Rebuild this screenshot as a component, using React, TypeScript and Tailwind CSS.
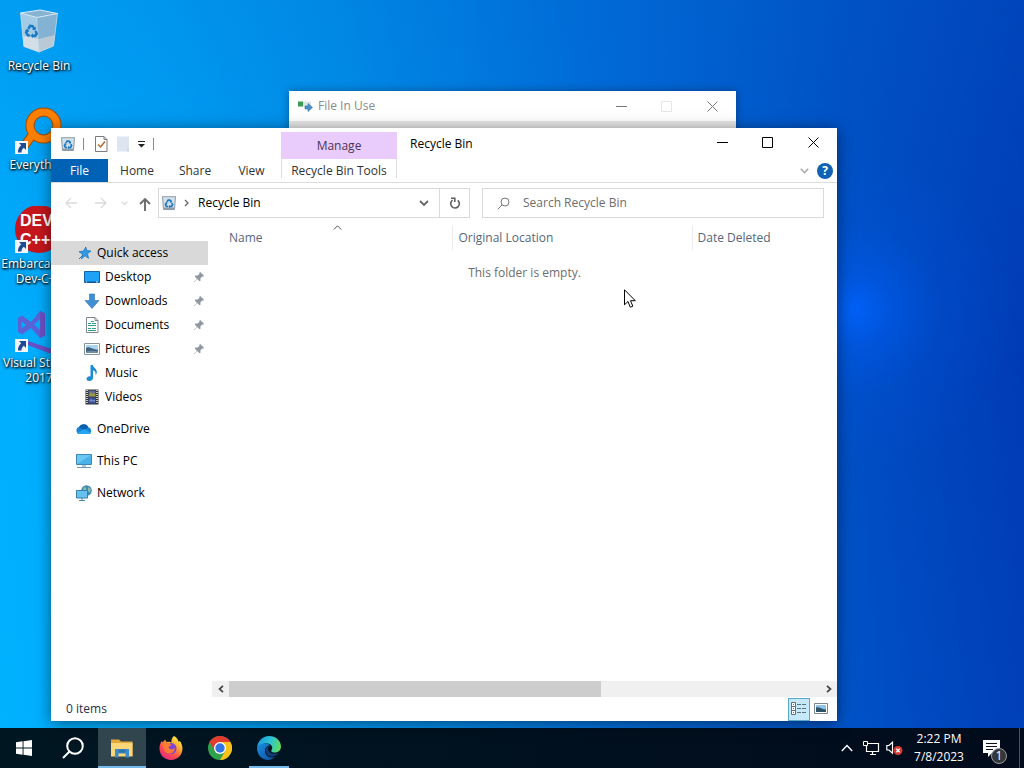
import type { ReactNode } from "react";

type IconProps = { className?: string };

/* ---------- shared glyphs ---------- */

function RecycleMark() {
  return (
    <g fill="none" stroke="#1879c4" strokeWidth="4">
      <path d="M7 8.500 10 3.500h4l2.500 4" />
      <path d="M18.500 11l2 4-2.500 4h-4" />
      <path d="M9.500 19H6l-2.500-4L5.500 11" />
      <path d="M19 3.500v6h-6z M14.500 15v8l-4-4z M1.500 11.500l5-3 2 5z" fill="#1879c4" stroke="none" />
    </g>
  );
}

function BinSmall({ className = "" }: IconProps) {
  return (
    <svg viewBox="0 0 14 16" className={`h-4 w-3.5 ${className}`} aria-hidden="true">
      <path d="M.5 1.500h13l-1 13h-11z" fill="#d3dfe8" stroke="#8b9aa5" />
      <path d="M1 2h12" stroke="#b9c7d1" />
      <path d="M2 13.500h10" stroke="#8e9da8" strokeWidth="2" />
      <g transform="translate(2 3.500) scale(.42)">
        <RecycleMark />
      </g>
    </svg>
  );
}

function BinLarge() {
  return (
    <svg viewBox="0 0 48 48" className="h-12 w-12" aria-hidden="true">
      <path d="M5.500 5 22 9.500 24 44 8.500 38.500z" fill="#a3cbe6" />
      <path d="M22 9.500 42.500 5.500 38.500 38 24 44z" fill="#84b2d2" />
      <path d="M8 28 23.500 31 24 44 9 38.500z" fill="#d3dee6" />
      <path d="M23.500 31 40 27 38.500 38 24 44z" fill="#b9c9d5" />
      <path d="M5.500 5 25 2l17.500 3.500L22 9.500z" fill="#86b3d0" stroke="#dcebf5" />
      <path d="M5.500 5 9 38.500 24 44l14.500-6L42.500 5.500" fill="none" stroke="#cfe0ec" strokeOpacity=".7" />
      <path d="M22 9.500 24 44" stroke="#cfe0ec" strokeOpacity=".5" />
      <g transform="translate(9 15) scale(.62) skewY(6)">
        <RecycleMark />
      </g>
    </svg>
  );
}

function ShortcutArrow() {
  return (
    <g transform="translate(0 34)">
      <path d="M0 0h13v13H0z" fill="#f4f6fa" />
      <path d="M4 2h7v7L8.800 6.800C7.300 8 6.500 9.500 6.500 11.500H3C2.800 8.500 4 6 6.200 4.200z" fill="#1f4a95" />
    </g>
  );
}

function EverythingIcon() {
  return (
    <svg viewBox="0 0 48 48" className="h-12 w-12" aria-hidden="true">
      <path d="M18 27 7 42" stroke="#a34d00" strokeWidth="9" />
      <circle cx="28.500" cy="18.500" r="13.500" fill="none" stroke="#a34d00" strokeWidth="9" />
      <path d="M18 27 8 41" stroke="#ff8000" strokeWidth="7" />
      <circle cx="28.500" cy="18.500" r="13.500" fill="none" stroke="#ff8000" strokeWidth="7" />
      <ShortcutArrow />
    </svg>
  );
}

function DevCppIcon() {
  return (
    <svg viewBox="0 0 48 48" className="h-12 w-12" aria-hidden="true">
      <circle cx="24" cy="23" r="24" fill="#c5161d" />
      <g fill="#fff" fontFamily="'Liberation Sans', sans-serif" fontWeight="700" fontSize="16">
        <text x="5" y="20">DEV</text>
        <text x="5" y="39">C++</text>
      </g>
      <ShortcutArrow />
    </svg>
  );
}

function VisualStudioIcon() {
  return (
    <svg viewBox="0 0 48 48" className="h-12 w-12" aria-hidden="true">
      <path d="M3 13l4-2.500 9 6.500L25 6l5 2.500v22L25 33l-9-10-9 6.500L3 27zM6.500 16.500v7l4.500-3.500zM25 14l-6 5.500 6 5.500z" fill="#5a62d6" fillRule="evenodd" />
      <path d="M25 6l5 2.500v22L25 33z" fill="#6a4fc4" />
      <path d="M13 36l24 8h11v5H36L13 40z" fill="#6a4fc4" />
      <ShortcutArrow />
    </svg>
  );
}

/* ---------- navigation icons ---------- */

function StarIcon() {
  return (
    <svg viewBox="0 0 14 14" className="h-3.5 w-3.5" aria-hidden="true">
      <path d="M7.800 1 8.800 4.500 13 5 9.500 7.700l1 4.600L7 9.800l-3.500 3 1-4.600L1 5.700l4.500-.6z" fill="#2f9be8" stroke="#2277bd" strokeWidth=".8" />
      <path d="M5 9 1 13" stroke="#2277bd" />
    </svg>
  );
}

function DesktopIcon() {
  return (
    <svg viewBox="0 0 16 16" className="h-4 w-4" aria-hidden="true">
      <path d="M.5 2.500h15v11H.5z" fill="#1ea2f8" stroke="#1565a5" />
      <path d="M1 13h14" stroke="#0f5088" />
      <path d="M2 13h1M12 13h2" stroke="#d8efff" />
    </svg>
  );
}

function DownloadIcon() {
  return (
    <svg viewBox="0 0 16 16" className="h-4 w-4" aria-hidden="true">
      <path d="M5.500 1h5v6.500H15L8 15.500 1 7.500h4.500z" fill="#3f8fd4" stroke="#2c72b4" strokeWidth=".6" />
    </svg>
  );
}

function DocumentIcon() {
  return (
    <svg viewBox="0 0 16 16" className="h-4 w-4" aria-hidden="true">
      <path d="M2.500.5H11l3 3v12H2.500z" fill="#fff" stroke="#7d8890" />
      <path d="M11 .5v3h3" fill="none" stroke="#7d8890" />
      <path d="M7 4.500h3M4 6.500h3M8 6.500h4M4 8.500h8M4 11.500h3M8 11.500h4M4 13.500h8" stroke="#2fa08e" />
    </svg>
  );
}

function PictureIcon() {
  return (
    <svg viewBox="0 0 16 16" className="h-4 w-4" aria-hidden="true">
      <path d="M.5 2.500h15v11H.5z" fill="#fff" stroke="#8b949b" />
      <path d="M2 4h12v8H2z" fill="#a9d3ee" />
      <path d="M2 7c3-2 5 1 12 2v3H2z" fill="#40617c" />
      <path d="M2 10.500c4-1 8-1 12 0V12H2z" fill="#6f8ea6" />
    </svg>
  );
}

function MusicIcon() {
  return (
    <svg viewBox="0 0 16 16" className="h-4 w-4" aria-hidden="true">
      <path d="M6.500 0h2.300c.3 2.800 4.200 3.500 4 7.200-.1 1.300-.7 2.300-1.300 3 .6-2.600-.4-4.200-2.500-4.900V13c0 1.600-1.500 3-3.500 3C3.400 16 2.500 15 2.500 14c0-1.700 1.900-3 4-2.600z" fill="#1b8ed2" />
    </svg>
  );
}

function VideoIcon() {
  return (
    <svg viewBox="0 0 16 16" className="h-4 w-4" aria-hidden="true">
      <path d="M1.500.5h13v15h-13z" fill="#34342f" />
      <path d="M4.500 1.500h7v6h-7z" fill="#5a6b9c" />
      <path d="M4.500 8.500h7v6h-7z" fill="#3c53a0" />
      <path d="M5 6l2-3 1.500 2L10 3l1.500 3v1.500h-7z" fill="#9a9742" />
      <path d="M5 12l2-2 2 1.500 2-1v2z" fill="#7f93cf" />
      <path d="M3 1v14M13 1v14" stroke="#fff" strokeWidth="1.400" strokeDasharray="1 1" />
    </svg>
  );
}

function OneDriveIcon() {
  return (
    <svg viewBox="0 0 16 16" className="h-4 w-4" aria-hidden="true">
      <path d="M3.500 13A3.600 3.600 0 0 1 3 6 5.200 5.200 0 0 1 12.300 6.200 3.500 3.500 0 0 1 12.700 13z" fill="#1583d8" />
      <path d="M3 6A5.200 5.200 0 0 1 12.300 6.200L8 9z" fill="#0b5fae" />
      <path d="M1 12 8.500 8l6.500 4c-.5.700-1.200 1-2.300 1H3.500c-1 0-1.800-.3-2.500-1z" fill="#27a5ee" />
    </svg>
  );
}

function PcIcon() {
  return (
    <svg viewBox="0 0 16 16" className="h-4 w-4" aria-hidden="true">
      <path d="M.5 1.500h15v10H.5z" fill="#6cc7f2" stroke="#3d87b4" />
      <path d="M1 11 15 2v9z" fill="#4bb2e8" />
      <path d="M6 12h4v2H6z" fill="#b4c9d5" />
      <path d="M1 14.500h14" stroke="#6a99b6" />
    </svg>
  );
}

function NetworkIcon() {
  return (
    <svg viewBox="0 0 16 16" className="h-4 w-4" aria-hidden="true">
      <circle cx="10.500" cy="5.500" r="5.300" fill="#3f88b2" />
      <path d="M8 2c2 0 3 2 2 3s-3 0-3 0zM12 2l3 2-1 4-2-2z" fill="#86bfb0" />
      <path d="M.5 5.500h11v7.500H.5z" fill="#66c1ee" stroke="#357fa9" />
      <path d="M3 15.500h6M6 13v2" stroke="#4888ad" />
    </svg>
  );
}

function PinIcon() {
  return (
    <svg viewBox="0 0 12 12" className="h-3 w-3" aria-hidden="true">
      <path d="M7 .8 11.200 5l-1 .6-1 0-1.800 1.800.1 2.300-1 .6-2.400-2.400L1.200 11l-.4-.3 3.100-3L1.700 5.400l.7-1 2.300.2L6.500 2.800V1.600z" fill="#8f989f" />
    </svg>
  );
}

/* ---------- small line icons ---------- */

function Stroke({ d, box, className, width = 1 }: { d: string; box: string; className: string; width?: number }) {
  return (
    <svg viewBox={box} className={className} fill="none" stroke="currentColor" strokeWidth={width} aria-hidden="true">
      <path d={d} />
    </svg>
  );
}

function CaptionButtons({ inactive = false }: { inactive?: boolean }) {
  return (
    <div className={`flex h-[29px] pr-px ${inactive ? "text-[#777]" : "text-black"}`}>
      <button type="button" aria-label="Minimize" className="flex w-[45px] items-center justify-center">
        <Stroke box="0 0 11 11" d="M0 5.500h11" className="h-[11px] w-[11px]" />
      </button>
      <button
        type="button"
        aria-label="Maximize"
        disabled={inactive}
        className={`flex w-[45px] items-center justify-center ${inactive ? "text-[#e6e6e6]" : ""}`}
      >
        <Stroke box="0 0 11 11" d="M.5.5h10v10H.5z" className="h-[11px] w-[11px]" />
      </button>
      <button type="button" aria-label="Close" className="flex w-[46px] items-center justify-center">
        <Stroke box="0 0 11 11" d="M.5.5l10 10M10.500.5l-10 10" className="h-[11px] w-[11px]" />
      </button>
    </div>
  );
}

/* ---------- desktop ---------- */

const shortcuts = [
  { label: "Recycle Bin", icon: <BinLarge /> },
  { label: "Everything", icon: <EverythingIcon /> },
  { label: "Embarcadero Dev-C++", icon: <DevCppIcon /> },
  { label: "Visual Studio 2017", icon: <VisualStudioIcon /> },
];

function DesktopShortcuts() {
  return (
    <div className="flex w-[78px] flex-col pt-2">
      {shortcuts.map((s) => (
        <button type="button" key={s.label} className="flex h-[99px] flex-col items-center gap-0.5 text-white">
          {s.icon}
          <span className="text-center text-[12px] leading-[15px] [text-shadow:1px_1px_2px_#000,0_1px_3px_#000]">
            {s.label}
          </span>
        </button>
      ))}
    </div>
  );
}

function FileInUseWindow() {
  return (
    <section
      aria-label="File In Use"
      className="absolute top-[91px] right-[288px] left-[289px] h-40 bg-[#e9e9e9] shadow-[0_0_8px_rgba(0,0,0,0.35)]"
    >
      <header className="flex h-[30px] items-center bg-white pl-2">
        <svg viewBox="0 0 16 12" className="h-3 w-4" aria-hidden="true">
          <path d="M5 1.500h9v5H5z" fill="#dfe7e3" />
          <path d="M1 1.500h5v5H1z" fill="#3d9a52" />
          <path d="M8 6h3V3.500L15.500 7.500l-4.500 4V9H8z" fill="#4c93cc" stroke="#2f6da1" strokeWidth=".6" />
        </svg>
        <h2 className="ml-[5px] flex-1 text-[12px] text-[#8b8b8b]">File In Use</h2>
        <CaptionButtons inactive />
      </header>
    </section>
  );
}

/* ---------- explorer ---------- */

function TitleBar() {
  return (
    <header className="flex h-[31px] items-stretch">
      <div className="flex w-[230px] items-center pl-2.5">
        <BinSmall />
        <span className="ml-2 h-3 w-px bg-[#8a8a8a]" />
        <button type="button" aria-label="Properties" className="ml-2.5">
          <svg viewBox="0 0 14 16" className="h-4 w-3.5" aria-hidden="true">
            <path d="M1.500.5H10l3 3v12H1.500z" fill="#fff" stroke="#7c7c7c" />
            <path d="M10 .5v3h3" fill="none" stroke="#7c7c7c" />
            <path d="M4 8.500 6.500 11 11 5.500" fill="none" stroke="#b06a2c" strokeWidth="1.500" />
          </svg>
        </button>
        <button type="button" aria-label="New folder" className="ml-2">
          <svg viewBox="0 0 14 16" className="h-4 w-3.5" aria-hidden="true">
            <path d="M1 .5h12V15.500H1z" fill="#dde5f1" />
            <path d="M11 12h2v3.500h-2z" fill="#cfd9ea" />
          </svg>
        </button>
        <button type="button" aria-label="Customize Quick Access Toolbar" className="ml-2">
          <svg viewBox="0 0 7 7" className="mt-0.5 h-[7px] w-[7px]" aria-hidden="true">
            <path d="M0 0h7v1H0zM0 3h7L3.500 6.500z" fill="#222" />
          </svg>
        </button>
        <span className="ml-2 h-3 w-px bg-[#8a8a8a]" />
      </div>
      <div className="mt-1 flex w-[116px] items-center justify-center bg-[#e9ccfb] pt-px text-[#4a3557]">Manage</div>
      <h1 className="ml-[13px] flex-1 self-center text-black">Recycle Bin</h1>
      <CaptionButtons />
    </header>
  );
}

function RibbonTabs() {
  return (
    <nav aria-label="Ribbon" className="flex h-6 items-stretch border-b border-[#dadbdc] text-[#333]">
      <button type="button" className="w-[57px] bg-[#0062b5] text-white">File</button>
      <button type="button" className="w-[58px]">Home</button>
      <button type="button" className="w-[58px]">Share</button>
      <button type="button" className="mr-0.5 w-[55px]">View</button>
      <button type="button" className="mb-1 w-[116px] border-x border-[#ddd] pt-1">Recycle Bin Tools</button>
      <div className="flex flex-1 items-center justify-end gap-2 pr-1 text-[#a5a5a5]">
        <button type="button" aria-label="Expand the Ribbon">
          <Stroke box="0 0 9 6" d="M.8.8l3.700 4 3.700-4" width={1.4} className="h-1.5 w-[9px]" />
        </button>
        <button
          type="button"
          aria-label="Help"
          className="flex h-4 w-4 items-center justify-center rounded-full bg-[#0f62b4] text-[12px] leading-4 font-bold text-white"
        >
          ?
        </button>
      </div>
    </nav>
  );
}

function AddressBar() {
  return (
    <div className="flex h-10 items-center pr-[13px] pl-3.5 text-[#dadada]">
      <button type="button" aria-label="Back" disabled>
        <Stroke box="0 0 12 12" d="M12 6H1M6 1L1 6l5 5" width={1.3} className="h-3 w-3" />
      </button>
      <button type="button" aria-label="Forward" disabled className="ml-[18px]">
        <Stroke box="0 0 12 12" d="M0 6h11M6 1l5 5-5 5" width={1.3} className="h-3 w-3" />
      </button>
      <button type="button" aria-label="Recent locations" disabled className="ml-3.5">
        <Stroke box="0 0 7 5" d="M.8.8l2.700 2.700L6.200.8" width={1.3} className="h-[5px] w-[7px]" />
      </button>
      <button type="button" aria-label="Up" className="mt-0.5 ml-2.5 text-[#6b6b6b]">
        <Stroke box="0 0 14 14" d="M7 14V2M2 7l5-5 5 5" width={1.9} className="h-3.5 w-3.5" />
      </button>
      <div className="ml-1.5 flex h-[30px] w-[312px] items-center border border-[#d9d9d9] text-[#666]">
        <BinSmall className="ml-[3px]" />
        <Stroke box="0 0 5 8" d="M1 1l3 3-3 3" width={1.3} className="ml-2 h-2 w-[5px]" />
        <button type="button" className="ml-[9px] flex-1 text-left text-black">Recycle Bin</button>
        <button type="button" aria-label="Previous locations" className="mr-2.5">
          <Stroke box="0 0 10 7" d="M1 1l4 4 4-4" width={1.8} className="h-[7px] w-2.5" />
        </button>
        <button
          type="button"
          aria-label="Refresh"
          className="flex h-full w-[30px] items-center justify-center border-l border-[#d9d9d9]"
        >
          <svg viewBox="0 0 12 12" className="h-3 w-3" fill="none" stroke="#5f5f5f" strokeWidth="1.600" aria-hidden="true">
            <path d="M3.500 3.200A4.300 4.300 0 1 0 8.700 3.300" />
            <path d="M2 1.200h3.800V5" />
          </svg>
        </button>
      </div>
      <label className="ml-3 flex h-[30px] flex-1 items-center border border-[#d9d9d9] pl-3.5 text-[#777]">
        <svg viewBox="0 0 13 13" className="h-[13px] w-[13px]" fill="none" stroke="currentColor" aria-hidden="true">
          <circle cx="8" cy="5" r="4" />
          <path d="M5.200 7.800.8 12.200" />
        </svg>
        <input
          type="search"
          aria-label="Search Recycle Bin"
          placeholder="Search Recycle Bin"
          className="ml-[13px] min-w-0 flex-1 outline-none placeholder:text-[#6d6d6d]"
        />
      </label>
    </div>
  );
}

const quickItems: { label: string; icon: ReactNode; pinned?: boolean }[] = [
  { label: "Desktop", icon: <DesktopIcon />, pinned: true },
  { label: "Downloads", icon: <DownloadIcon />, pinned: true },
  { label: "Documents", icon: <DocumentIcon />, pinned: true },
  { label: "Pictures", icon: <PictureIcon />, pinned: true },
  { label: "Music", icon: <MusicIcon /> },
  { label: "Videos", icon: <VideoIcon /> },
];

const roots = [
  { label: "OneDrive", icon: <OneDriveIcon /> },
  { label: "This PC", icon: <PcIcon /> },
  { label: "Network", icon: <NetworkIcon /> },
];

function NavigationPane() {
  return (
    <nav aria-label="Navigation pane" className="flex w-[157px] shrink-0 flex-col pt-[18px] text-black">
      <a href="#quick-access" className="flex h-6 items-center gap-[5px] bg-[#d9d9d9] pl-[27px]">
        <StarIcon />
        Quick access
      </a>
      <ul>
        {quickItems.map((item) => (
          <li key={item.label}>
            <a href={`#${item.label.toLowerCase()}`} className="flex h-6 items-center gap-[5px] pr-[3px] pl-[33px]">
              {item.icon}
              <span className="flex-1">{item.label}</span>
              {item.pinned && <PinIcon />}
            </a>
          </li>
        ))}
      </ul>
      <ul className="mt-2 flex flex-col gap-2">
        {roots.map((item) => (
          <li key={item.label}>
            <a href={`#${item.label.toLowerCase().replace(" ", "-")}`} className="flex h-6 items-center gap-[5px] pl-[25px]">
              {item.icon}
              {item.label}
            </a>
          </li>
        ))}
      </ul>
    </nav>
  );
}

function FileList() {
  return (
    <div className="ml-1 flex min-w-0 flex-1 flex-col">
      <table className="mt-[3px] w-full table-fixed text-left">
        <thead className="text-[#56667a]">
          <tr className="h-6">
            <th scope="col" className="relative w-[240px] border-r border-[#ececec] pl-[17px] font-normal">
              Name
              <Stroke box="0 0 9 5" d="M.8 4.500L4.500.8l3.700 3.700" className="absolute -top-px left-[121px] h-[5px] w-[9px] text-[#555]" />
            </th>
            <th scope="col" className="w-[240px] border-r border-[#ececec] pl-1.5 font-normal">Original Location</th>
            <th scope="col" className="pl-[5px] font-normal">Date Deleted</th>
          </tr>
        </thead>
        <tbody>
          <tr className="h-[46px]">
            <td colSpan={3} className="text-center text-[#6d6d6d]">This folder is empty.</td>
          </tr>
        </tbody>
      </table>
      <div className="mt-auto flex h-4 items-center bg-[#f0f0f0] text-[#444]">
        <button type="button" aria-label="Scroll left" className="flex w-[17px] justify-center">
          <Stroke box="0 0 6 8" d="M5 .8L1.500 4 5 7.200" width={1.7} className="h-2 w-1.5" />
        </button>
        <div className="h-full flex-1">
          <div className="h-full w-[63%] bg-[#cdcdcd]" />
        </div>
        <button type="button" aria-label="Scroll right" className="flex w-[17px] justify-center">
          <Stroke box="0 0 6 8" d="M1 .8L4.500 4 1 7.200" width={1.7} className="h-2 w-1.5" />
        </button>
      </div>
    </div>
  );
}

function StatusBar() {
  return (
    <footer className="flex h-6 items-center pr-[9px] pl-[15px] text-[#26324d]">
      <span className="flex-1">0 items</span>
      <button
        type="button"
        aria-label="Details view"
        aria-pressed="true"
        className="flex h-[23px] w-[22px] items-center justify-center border border-[#5aa7cc] bg-[#c5e9f8]"
      >
        <svg viewBox="0 0 16 14" className="h-3.5 w-4" fill="none" stroke="#5d727e" aria-hidden="true">
          <path d="M.5.5h4v4h-4zM.5 4.500h4v4h-4zM.5 8.500h4v4h-4z" fill="#fff" />
          <path d="M6 2.500h4M11 2.500h4M6 6.500h4M11 6.500h4M6 10.500h4M11 10.500h4M2 2.500h1M2 6.500h1M2 10.500h1" />
        </svg>
      </button>
      <button type="button" aria-label="Large thumbnails" className="mb-0.5 ml-1">
        <svg viewBox="0 0 14 11" className="h-[11px] w-3.5" aria-hidden="true">
          <path d="M.5.5h13v10H.5z" fill="#fff" stroke="#7a8690" />
          <path d="M2 2h10v7H2z" fill="#8fc4ea" />
          <path d="M2 4.500c3-1 5 1.500 10 2V9H2z" fill="#2e5366" />
        </svg>
      </button>
    </footer>
  );
}

function ExplorerWindow() {
  return (
    <section
      aria-label="Recycle Bin"
      className="absolute top-32 right-[187px] bottom-[7px] left-[51px] flex flex-col bg-white text-[12px] leading-4 shadow-[0_2px_14px_rgba(0,0,0,0.5)]"
    >
      <TitleBar />
      <RibbonTabs />
      <AddressBar />
      <div className="flex min-h-0 flex-1">
        <NavigationPane />
        <FileList />
      </div>
      <StatusBar />
    </section>
  );
}

/* ---------- taskbar ---------- */

function StartIcon() {
  return (
    <svg viewBox="0 0 16 16" className="h-4 w-4" fill="#fff" aria-hidden="true">
      <path d="M0 2.200 6.600 1.300v6.200H0zM7.500 1.200 16 0v7.500H7.500zM0 8.400h6.600v6.300L0 13.800zM7.500 8.400H16V16l-8.500-1.200z" />
    </svg>
  );
}

function SearchIcon() {
  return (
    <svg viewBox="0 0 22 22" className="h-[22px] w-[22px]" fill="none" stroke="#fff" strokeWidth="2" aria-hidden="true">
      <circle cx="13" cy="9" r="7.800" />
      <path d="M7.500 14.500 1 21" />
    </svg>
  );
}

function FolderIcon() {
  return (
    <svg viewBox="0 0 24 20" className="h-5 w-6" aria-hidden="true">
      <path d="M1 1.500h8l2 2h11.500V18H1z" fill="#e5a93a" />
      <path d="M1 5h21.500v13.500H1z" fill="#fcd77a" />
      <path d="M5 19.500v-8.500h14v8.500h-3.500v-4h-7v4z" fill="#3d8cc9" />
      <path d="M8.500 11.500h7v3h-7z" fill="#2b74ae" />
    </svg>
  );
}

function FirefoxIcon() {
  return (
    <svg viewBox="0 0 24 24" className="h-6 w-6" aria-hidden="true">
      <defs>
        <linearGradient id="ff-body" x1=".85" y1=".05" x2=".2" y2="1">
          <stop offset="0" stopColor="#fff24a" />
          <stop offset=".35" stopColor="#ffa22b" />
          <stop offset=".65" stopColor="#ff4a4f" />
          <stop offset="1" stopColor="#e02a8a" />
        </linearGradient>
      </defs>
      <path d="M15 0c3 1.500 4.200 4 4.500 5.500 1 .2 1.300-.5 1.300-.5 1.600 2 2.700 4.700 2.700 7.500C23.500 19 18.500 24 12 24S.5 19 .5 12.500C.5 9 1.500 6.500 3 4.800c.2 1 .5 1.500.8 1.800C4.600 5 5.600 4 6.500 3.500c0 1.200.4 2 1 2.500 2-.6 3.800-.4 5 .5C12 4 13 1.500 15 0z" fill="url(#ff-body)" />
      <path d="M11.500 7c4 0 6 2.500 6 5.500s-2.300 5.500-5.500 5.500-5.500-2-5.500-5c0-1.500.6-2.500 1.600-3.500z" fill="#7b45d8" />
      <path d="M3 9c2-2 5-2 6.500-1.200.8.500 2.500.4 3 .7-.4 1.500-2.600 1.500-3 3 1 2.500 5 2.500 6.500.5-.5 4-3.500 6-6.500 5.500S4.500 14.500 4.500 12z" fill="#ff7a33" />
    </svg>
  );
}

function ChromeIcon() {
  return (
    <svg viewBox="0 0 24 24" className="h-6 w-6" aria-hidden="true">
      <circle cx="12" cy="12" r="12" fill="#2fa24c" />
      <path d="M22.400 6A12 12 0 0 1 12 24L17.200 15 12 6z" fill="#fbc116" />
      <path d="M1.600 6A12 12 0 0 1 22.400 6H12L6.800 15z" fill="#e33b2e" />
      <circle cx="12" cy="12" r="6" fill="#fff" />
      <circle cx="12" cy="12" r="4.700" fill="#3274e4" />
    </svg>
  );
}

function EdgeIcon() {
  return (
    <svg viewBox="0 0 24 24" className="h-6 w-6" aria-hidden="true">
      <defs>
        <linearGradient id="edge-top" x1="0" y1=".3" x2="1" y2=".5">
          <stop offset="0" stopColor="#1c97dd" />
          <stop offset=".55" stopColor="#2cc3d3" />
          <stop offset="1" stopColor="#62dc5c" />
        </linearGradient>
        <linearGradient id="edge-low" x1="0" y1="0" x2="1" y2="1">
          <stop offset="0" stopColor="#1a8ee0" />
          <stop offset="1" stopColor="#0f4c9c" />
        </linearGradient>
      </defs>
      <path d="M0 12C.5 5 5.500 0 12 0c7 0 12 5 12 10.500 0 3.800-2.700 6-6 6-2.300 0-3.800-.9-3.800-1.800 0-.7 1-1 1-2.900C15.200 9 12.500 7.500 9.500 7.500 4.500 7.500 1 10 0 12z" fill="url(#edge-top)" />
      <path d="M0 12c1-2.500 4-4.500 8-4.500 2 0 4 .6 5.500 2-2.500-.3-5.500 1.500-5.500 5.500 0 5 5 7.500 9.500 6-1.700 2-4 3-6 3C4.500 24 0 18.500 0 12z" fill="url(#edge-low)" />
      <path d="M8.500 14c-.3 4.500 4 7.500 8.500 6.200 2.200-.6 3.800-1.900 5-3.400-1.300.7-3 1-4.500.9-4 0-6.500-2-6.500-4.700 0-1.500.8-2.700 2-3.500-2.500.2-4.300 2-4.500 4.500z" fill="#103f78" />
    </svg>
  );
}

const apps = [
  { label: "Start", icon: <StartIcon />, active: false, running: false },
  { label: "Search", icon: <SearchIcon />, active: false, running: false },
  { label: "File Explorer", icon: <FolderIcon />, active: true, running: true },
  { label: "Firefox", icon: <FirefoxIcon />, active: false, running: false },
  { label: "Google Chrome", icon: <ChromeIcon />, active: false, running: false },
  { label: "Microsoft Edge", icon: <EdgeIcon />, active: false, running: true },
];

function Taskbar() {
  return (
    <footer className="flex h-10 shrink-0 items-stretch bg-linear-to-r from-[#001722] to-[#010b1c] text-[12px] text-white">
      <div className="flex flex-1 gap-px">
        {apps.map((app) => (
          <button
            type="button"
            key={app.label}
            aria-label={app.label}
            className={`relative flex w-12 items-center justify-center ${app.active ? "bg-[#31454f]" : ""}`}
          >
            {app.icon}
            {app.running && (
              <span className={`absolute bottom-0 h-0.5 bg-[#76b9ed] ${app.active ? "inset-x-0" : "inset-x-1"}`} />
            )}
          </button>
        ))}
      </div>
      <div className="flex items-center">
        <button type="button" aria-label="Show hidden icons">
          <Stroke box="0 0 12 8" d="M.8 7L6 1.500 11.200 7" width={1.4} className="h-2 w-3" />
        </button>
        <button type="button" aria-label="Network" className="ml-2.5">
          <svg viewBox="0 0 17 15" className="h-[15px] w-[17px]" fill="none" stroke="#fff" aria-hidden="true">
            <path d="M5 2.500h10.500v8h-12V5M7 13.500h6M9.500 10.500v3" strokeWidth="1.200" />
            <path d="M.5.500h4v4h-4z" />
          </svg>
        </button>
        <button type="button" aria-label="Volume muted" className="ml-1.5">
          <svg viewBox="0 0 17 14" className="h-3.5 w-[17px]" aria-hidden="true">
            <path d="M.8 4.500h2.200L6.500 1.200v11L3 9H.8z" fill="none" stroke="#fff" strokeWidth="1.200" />
            <circle cx="12" cy="9.500" r="4.500" fill="#d8392f" />
            <path d="M10.300 7.800l3.400 3.400M13.700 7.800l-3.400 3.400" stroke="#fff" strokeWidth="1.300" />
          </svg>
        </button>
        <button type="button" className="ml-0.5 w-[68px] text-center leading-[18px]">
          <span className="block">2:22 PM</span>
          <span className="block">7/8/2023</span>
        </button>
        <button type="button" aria-label="Notifications" className="relative ml-2.5 h-8 w-6">
          <svg viewBox="0 0 17 17" className="absolute top-2 left-0 h-[17px] w-[17px]" aria-hidden="true">
            <path d="M0 0h17v13h-8l-4 4v-4H0z" fill="#fff" />
            <path d="M3 3.500h11M3 6.500h11M3 9.500h7" stroke="#06111c" />
          </svg>
          <span className="absolute right-0 bottom-0 flex h-4 w-4 items-center justify-center rounded-full border border-[#9a9a9a] bg-[#33383d] text-[12px] leading-none">
            1
          </span>
        </button>
        <button type="button" aria-label="Show desktop" className="ml-3 h-full w-[5px] border-l border-[#4b545c]" />
      </div>
    </footer>
  );
}

export default function App() {
  return (
    <div className="flex h-screen flex-col overflow-hidden font-['Open_Sans','Noto_Sans',sans-serif]">
      <main className="relative flex-1 bg-[radial-gradient(circle_at_855px_310px,rgba(0,100,255,0.85)_0px,rgba(0,96,250,0.45)_35px,rgba(0,90,240,0.15)_85px,rgba(0,90,240,0)_160px),linear-gradient(180deg,rgba(0,110,210,0.25)_0%,rgba(0,110,210,0)_50%),linear-gradient(84deg,#00b2ff_0%,#00a4f8_20%,#008ee9_38%,#006ad8_60%,#004cc2_82%,#0037b2_100%)]">
        <DesktopShortcuts />
        <FileInUseWindow />
        <ExplorerWindow />
        {/* mouse pointer */}
        <svg viewBox="0 0 12 20" className="absolute top-[289px] left-[624px] h-5 w-3" aria-hidden="true">
          <path d="M.5.800v15l3.500-3.300 2.300 5.700 2.500-1-2.300-5.500h4.800z" fill="#fff" stroke="#000" />
        </svg>
      </main>
      <Taskbar />
    </div>
  );
}
